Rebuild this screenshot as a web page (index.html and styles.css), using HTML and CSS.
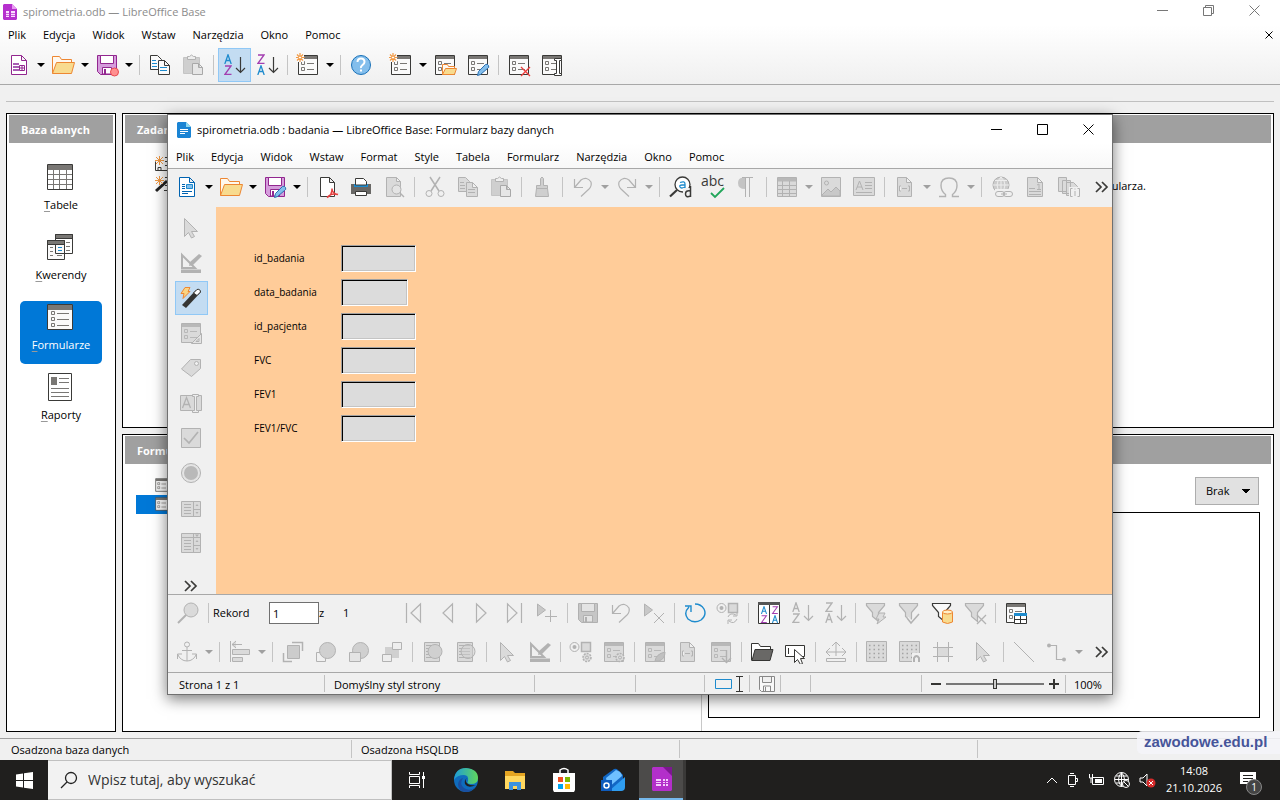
FILE: index.html
```html
<!DOCTYPE html>
<html lang="pl">
<head>
<meta charset="utf-8">
<title>spirometria.odb — LibreOffice Base</title>
<link rel="stylesheet" href="styles.css">
</head>
<body>
<svg class="sprite" aria-hidden="true">
  <symbol id="newdb" viewBox="0 0 24 24"><path d="M4.500 2.500h10l5 5v14h-15zM14.500 2.500v5h5" fill="#fff" stroke="#92278f"/><path d="M6 10h6v8H6z" fill="#a85cb4"/><path d="M6 12.500h6M6 15.500h6" stroke="#fff"/><path d="M12.500 12.500h5v5h-5zM12.500 15h5M15 12.500v5" fill="#fff" stroke="#92278f"/></symbol>
  <symbol id="newdoc" viewBox="0 0 24 24"><path d="M4.500 2.500h10l5 5v14h-15zM14.500 2.500v5h5" fill="#fff" stroke="#0063b1"/><path d="M7 9.500h3M7 11.500h3M7 13.500h3M7 16.500h10M7 18.500h6" stroke="#0063b1"/><path d="M11.500 9.500h6v4h-6z" fill="#83beec" stroke="#1e8bcd"/></symbol>
  <symbol id="folder" viewBox="0 0 24 24"><path d="M1.500 20.500v-17h7l2 3h10v4" fill="#fff8ee" stroke="#ed8733"/><path d="M1.500 20.500l4-11h18l-3 11z" fill="#f8db8f" stroke="#ed8733"/></symbol>
  <symbol id="floppy" viewBox="0 0 24 24"><path d="M2.500 2.500h19v19h-16l-3-3z" fill="var(--p,#d59ddc)" stroke="var(--q,#92278f)"/><path d="M5.500 2.500h13v8h-13zM7.500 21v-6.500h9V21z" fill="var(--w,#fff)" stroke="var(--q,#92278f)"/><path d="M9 16h2v5H9z" fill="var(--q,#92278f)"/></symbol>
  <symbol id="dot" viewBox="0 0 24 24"><circle cx="19.500" cy="19" r="4" fill="#ff9090" stroke="#e84a50"/></symbol>
  <symbol id="pencil" viewBox="0 0 24 24"><path d="M11.500 22.500l1-4 7-7q2-1 3 1t-1 3l-7 6z" fill="#83beec" stroke="#2b6fb0"/></symbol>
  <symbol id="copy" viewBox="0 0 24 24"><path d="M2.500 2.500h7l4 4v10h-11z" fill="var(--f)" stroke="var(--s)"/><path d="M4 7.500h4M4 10.500h5M4 13.500h5" stroke="var(--b)"/><path d="M10.500 7.500h6l5 5v9h-11zM16.500 7.500v5h5" fill="var(--f)" stroke="var(--s)"/><path d="M12 14.500h7M12 17.500h7" stroke="var(--b)"/></symbol>
  <symbol id="paste" viewBox="0 0 24 24"><path d="M2.500 4.500h16v16h-16z" fill="#cfcfcf" stroke="#c4c4c4"/><path d="M6.500 3.500h2q2-3 4 0h2v3h-8z" fill="#eee" stroke="var(--s)"/><path d="M11.500 10.500h6l4 4v7h-10zM17.500 10.500v4h4" fill="#e6e6e6" stroke="#a8a8a8"/></symbol>
  <symbol id="A" viewBox="0 0 8 10"><path d="M.8 10L4 .8 7.200 10M2 6.500h4" fill="none" stroke="var(--a)" stroke-width="1.300"/></symbol>
  <symbol id="Z" viewBox="0 0 8 10"><path d="M1 1h6L1 9.300h6.500" fill="none" stroke="var(--z)" stroke-width="1.300"/></symbol>
  <symbol id="az" viewBox="0 0 24 24"><use href="#A" x="2" y="1" width="8" height="10"/><use href="#Z" x="2" y="12" width="8" height="10"/><path d="M18.500 4v15M14 15l4.500 4.500L23 15" fill="none" stroke="var(--s)" stroke-width="1.200"/></symbol>
  <symbol id="za" viewBox="0 0 24 24"><use href="#Z" x="2" y="1" width="8" height="10"/><use href="#A" x="2" y="12" width="8" height="10"/><path d="M18.500 4v15M14 15l4.500 4.500L23 15" fill="none" stroke="var(--s)" stroke-width="1.200"/></symbol>
  <symbol id="form" viewBox="0 0 24 24"><path d="M2.500 2.500h19v19h-19z" fill="var(--f)" stroke="var(--s)"/><path d="M3 3h18v3H3z" fill="var(--h)"/><path d="M5.500 8.500h3v3h-3zM5.500 14.500h3v3h-3z" fill="none" stroke="var(--h)"/><path d="M11 10.500h7M11 16.500h7" stroke="var(--h)"/></symbol>
  <symbol id="sun" viewBox="0 0 24 24"><path d="M0 0h8v9H0z" fill="var(--bg,#f8f8f8)"/><path d="M4 0v9M-.5 4.500h9M1 1.500l6 6M7 1.500l-6 6" stroke="#f29a45" stroke-width="1.200"/><circle cx="4" cy="4.500" r="1.500" fill="#fff" stroke="#f29a45"/></symbol>
  <symbol id="help" viewBox="0 0 24 24"><circle cx="12" cy="12" r="9.500" fill="#83beec" stroke="#1971b8"/><path d="M8.500 9q0-3.500 3.500-3.500T15.500 9q0 1.500-2 3t-1.500 3" fill="none" stroke="#fff" stroke-width="2"/><path d="M11 16.500h2v2h-2z" fill="#fff"/></symbol>
  <symbol id="minifolder" viewBox="0 0 24 24"><path d="M9.500 21.500v-10h5l1 2h6v2" fill="#fff8ee" stroke="#ed8733"/><path d="M9.500 21.500l3-6h11l-2 6z" fill="#f8db8f" stroke="#ed8733"/></symbol>
  <symbol id="redx" viewBox="0 0 24 24"><path d="M14 14l9 9M23 14l-9 9" stroke="var(--r,#ed3d3b)" stroke-width="1.300"/></symbol>
  <symbol id="ibeam" viewBox="0 0 24 24"><path d="M14.500 5.500h7v2h-2v13h2v2h-7v-2h2v-13h-2z" fill="var(--w,#fff)" stroke="var(--s)"/></symbol>
  <symbol id="pdf" viewBox="0 0 24 24"><path d="M4.500 21.500v-19h9l5 5v14zM13.500 2.500v5h5" fill="#fff" stroke="#3a3a38"/><path d="M11 22.500q5-2 5-9 0 5 6 6-7-2-11 3" fill="none" stroke="#e4403f" stroke-width="1.400"/></symbol>
  <symbol id="print" viewBox="0 0 24 24"><path d="M2 9h20v10H2z" fill="#696866"/><path d="M5 9h14v3H5z" fill="#1e8bcd"/><path d="M6.500 10V3.500h8l3 3V10z" fill="#fff" stroke="#3a3a38"/><path d="M6.500 16.500h11v4h-11z" fill="#fff" stroke="#3a3a38"/></symbol>
  <symbol id="preview" viewBox="0 0 24 24"><path d="M4.500 2.500h10l4 4v15h-14zM14.500 2.500v4h4" fill="var(--f)" stroke="var(--s)"/><circle cx="14.500" cy="14.500" r="4.500" fill="#e4e4e4" stroke="var(--s)"/><path d="M18 18l4 4" stroke="var(--s)" stroke-width="1.500"/></symbol>
  <symbol id="cut" viewBox="0 0 24 24"><path d="M7 2l9 14M17 2L8 16" stroke="var(--s)" stroke-width="1.500"/><circle cx="6" cy="18.500" r="3" fill="none" stroke="var(--s)"/><circle cx="18" cy="18.500" r="3" fill="none" stroke="var(--s)"/></symbol>
  <symbol id="brush" viewBox="0 0 24 24"><path d="M10.500 10.500v-7q1.500-3 3 0v7h4v3h-11v-3zM6.500 13.500l-1 8h13l-1-8z" fill="#cfcfcf" stroke="var(--s)"/></symbol>
  <symbol id="undo" viewBox="0 0 24 24"><path d="M3.500 4v8.500H12M4 12l6-7q6-4 10 2 1 4-2 7l-8 7.500" fill="none" stroke="var(--s)" stroke-width="1.200"/></symbol>
  <symbol id="redo" viewBox="0 0 24 24"><path d="M20.500 4v8.500H12M20 12l-6-7Q8 1 4 7q-1 4 2 7l8 7.500" fill="none" stroke="var(--s)" stroke-width="1.200"/></symbol>
  <symbol id="find" viewBox="0 0 24 24"><circle cx="14.500" cy="9.500" r="7.500" fill="#fff" stroke="#3a3a38" stroke-width="1.300"/><path d="M9 15l-7 6.500" stroke="#3a3a38" stroke-width="2.200"/><path d="M12 7.500q5-2 5 1.500v4m0-3h-3q-3 0-2 2t5 0" fill="none" stroke="#1e8bcd" stroke-width="1.300"/><path d="M15 13h9v10h-9z" fill="#f0f0f0"/><path d="M22.500 11v11M22.500 16q-5-1-5 3t5 2" fill="none" stroke="#3a3a38" stroke-width="1.500"/></symbol>
  <symbol id="check" viewBox="0 0 24 24"><path d="M10 18l4 4 9-9" fill="none" stroke="#21a65a" stroke-width="1.800"/></symbol>
  <symbol id="pilcrow" viewBox="0 0 24 24"><path d="M11 3v11q-7 0-7-6t7-5" fill="#c4c4c4"/><path d="M8 2.500h11M11.500 3v19M15.500 3v19" fill="none" stroke="var(--s)"/></symbol>
  <symbol id="table" viewBox="0 0 24 24"><path d="M2.500 2.500h19v19h-19z" fill="var(--f)" stroke="var(--s)"/><path d="M3 3h18v3.500H3z" fill="var(--h)"/><path d="M3 10.500h18M3 14.500h18M3 18.500h18M7.500 6v15M14.500 6v15" stroke="var(--s)"/></symbol>
  <symbol id="image" viewBox="0 0 24 24"><path d="M2.500 2.500h19v19h-19z" fill="var(--f)" stroke="var(--s)"/><circle cx="7.500" cy="8" r="2" fill="none" stroke="var(--s)"/><path d="M3 20l6-6 3 3 5-5 4 4v5H3z" fill="#c8c8c8" stroke="var(--s)"/></symbol>
  <symbol id="textbox" viewBox="0 0 24 24"><path d="M1.500 2.500h21v18h-21zM13 7.500h7M13 10.500h7M13 13.500h7M4 17.500h16M4 15l3.500-9L11 15M5 12h5" fill="var(--f)" stroke="var(--s)"/></symbol>
  <symbol id="field" viewBox="0 0 24 24"><path d="M4.500 2.500h9l5 5v14h-14zM13.500 2.500v5h5M8 11H6.500v5H8M15 11h1.500v5H15M9 13.500h5" fill="var(--f)" stroke="var(--s)"/></symbol>
  <symbol id="omega" viewBox="0 0 24 24"><path d="M2 21.500h6.500v-2Q4 16 4 10.500 4 3 12 3t8 7.500q0 5.500-4.500 9v2H22" fill="none" stroke="var(--s)" stroke-width="1.400"/></symbol>
  <symbol id="link" viewBox="0 0 24 24"><circle cx="11" cy="10" r="8" fill="#ccc" stroke="var(--s)"/><path d="M11 2v16M3 10h16M5 5.500h12M5 14.500h12M11 2q-8 8 0 16M11 2q8 8 0 16" fill="none" stroke="#eee"/><path d="M5 14h18v9H5z" fill="#f0f0f0"/><rect x="5.500" y="16.500" width="9" height="5" rx="2.500" fill="none" stroke="var(--s)"/><rect x="13.500" y="16.500" width="9" height="5" rx="2.500" fill="none" stroke="var(--s)"/><path d="M11 19h6" stroke="var(--s)"/></symbol>
  <symbol id="footnote" viewBox="0 0 24 24"><path d="M4.500 2.500h10l5 5v14h-15zM14.500 2.500v5h5M6 13.500h6M6 16.500h12M6 19.500h12M14 10l2-1v5M14 14.500h4" fill="var(--f)" stroke="var(--s)"/></symbol>
  <symbol id="cross" viewBox="0 0 24 24"><path d="M2.500 2.500h8v14h-8zM6.500 5.500h8v13h-8zM10.500 7.500h7l4 4v9h-11z" fill="var(--f)" stroke="var(--s)"/><path d="M13 12h11v11H13z" fill="#f0f0f0"/><path d="M16.500 13.500h-2v8h2M21.500 13.500h2v8h-2M19 16v5M19 13.500v1" fill="none" stroke="var(--s)"/></symbol>
  <symbol id="more" viewBox="0 0 24 24"><path d="M6 7l5 5-5 5M12 7l5 5-5 5" fill="none" stroke="#3a3a38" stroke-width="1.700"/></symbol>
  <symbol id="arrow" viewBox="0 0 24 24"><path d="M5.500 2.500v18l4-4 3 5.500 3-1.500-3-5h6z" fill="var(--f)" stroke="var(--s)"/></symbol>
  <symbol id="design" viewBox="0 0 24 24"><path d="M3 4v13h13z" fill="none" stroke="var(--s)" stroke-width="2"/><path d="M10 15l1-4 9-8 3 2-9 9z" fill="var(--s)"/><path d="M2 18.500h20v3.500H2z" fill="var(--s)"/></symbol>
  <symbol id="wand" viewBox="0 0 24 24"><path d="M3 19L17 4q4-2 5 2L7 22z" fill="#353533"/><path d="M14.500 7l3.500-3.500q3-1 3.500 2.500L18 9.500z" fill="#fff" stroke="#353533"/><path d="M6 1.500h5l-2 4h2l-7 7 1-5H2z" fill="#fbd482" stroke="#ed8733"/></symbol>
  <symbol id="triangle" viewBox="0 0 24 24"><path d="M22.500 12.500v10h-10z" fill="#e4e4e4" stroke="var(--s)"/><path d="M20 17.500v3h-3z" fill="none" stroke="var(--s)"/></symbol>
  <symbol id="tag" viewBox="0 0 24 24"><path d="M2.500 13l9-9.500h10v9l-9 8z" fill="var(--f)" stroke="var(--s)"/><circle cx="17.500" cy="7.500" r="2" fill="#f0f0f0" stroke="var(--s)"/></symbol>
  <symbol id="edit" viewBox="0 0 24 24"><path d="M1.500 4.500h21v15h-21z" fill="var(--f)" stroke="var(--s)"/><path d="M3.500 17l4-10.500 4 10.500M5 13.500h5" fill="none" stroke="var(--s)" stroke-width="1.300"/><path d="M13.500 3.500h6v2h-2v14h2v2h-6v-2h2v-14h-2z" fill="#eee" stroke="var(--s)"/></symbol>
  <symbol id="tick" viewBox="0 0 24 24"><path d="M2.500 2.500h19v19h-19z" fill="var(--f)" stroke="var(--s)"/><path d="M5 12l5 5L19 6" fill="none" stroke="var(--s)" stroke-width="1.700"/></symbol>
  <symbol id="radio" viewBox="0 0 24 24"><circle cx="12" cy="12" r="9.500" fill="#e4e4e4" stroke="var(--s)"/><circle cx="12" cy="12" r="7" fill="#b9b9b9"/></symbol>
  <symbol id="list" viewBox="0 0 24 24"><path d="M2.500 5.500h19v15h-19zM14.500 5.500v15M14.500 13.500h7M5 8.500h7M5 11.500h7M5 14.500h7M5 17.500h7" fill="var(--f)" stroke="var(--s)"/><path d="M16.500 10l1.500-2 1.500 2zM16.500 16l1.500 2 1.500-2z" fill="var(--s)"/></symbol>
  <symbol id="combo" viewBox="0 0 24 24"><path d="M2.500 2.500h19v19h-19zM2.500 6.500h19M14.500 2.500v19M14.500 14.500h7M5 9.500h7M5 12.500h7M5 15.500h7M5 18.500h7" fill="var(--f)" stroke="var(--s)"/><path d="M16 3.500h4L18 6zM16.500 11l1.500-2 1.500 2zM16.500 17l1.500 2 1.500-2z" fill="var(--s)"/></symbol>
  <symbol id="search" viewBox="0 0 24 24"><circle cx="15" cy="9" r="7" fill="var(--f)" stroke="var(--s)"/><path d="M10 14l-8 8" stroke="var(--s)" stroke-width="2"/></symbol>
  <symbol id="first" viewBox="0 0 24 24"><path d="M3.500 2v20M17.500 3v18L8 12z" fill="none" stroke="var(--s)" stroke-width="1.200"/></symbol>
  <symbol id="prev" viewBox="0 0 24 24"><path d="M16.500 3v18L7 12z" fill="none" stroke="var(--s)" stroke-width="1.200"/></symbol>
  <symbol id="next" viewBox="0 0 24 24"><path d="M7.500 3v18l9.500-9z" fill="none" stroke="var(--s)" stroke-width="1.200"/></symbol>
  <symbol id="last" viewBox="0 0 24 24"><path d="M19.500 2v20M5.500 3v18l9.500-9z" fill="none" stroke="var(--s)" stroke-width="1.200"/></symbol>
  <symbol id="recnew" viewBox="0 0 24 24"><path d="M2.500 3v12l8-6z" fill="#c8c8c8" stroke="var(--s)"/><path d="M10 15.500h12M15.500 9v12" stroke="var(--s)"/></symbol>
  <symbol id="recdel" viewBox="0 0 24 24"><path d="M2.500 3v12l8-6z" fill="#c8c8c8" stroke="var(--s)"/><path d="M12 12l10 10M22 12L12 22" stroke="var(--s)"/></symbol>
  <symbol id="refresh" viewBox="0 0 24 24"><path d="M6 6q-6 6-1 12 6 5 13 1 6-5 3-11-3-5-9-5M2 5h6v6" fill="none" stroke="#1e8bcd" stroke-width="1.400"/></symbol>
  <symbol id="controls" viewBox="0 0 24 24"><circle cx="5.500" cy="7" r="4.500" fill="none" stroke="var(--s)"/><circle cx="5.500" cy="7" r="2" fill="var(--s)"/><path d="M12.500 2.500h9v9h-9z" fill="var(--f)" stroke="var(--s)" stroke-width="1.500"/></symbol>
  <symbol id="cycle" viewBox="0 0 24 24"><path d="M12 16q2-5 8-2m1-3v4h-4M21 18q-3 6-8 2m-1 3v-4h4" fill="none" stroke="var(--s)"/></symbol>
  <symbol id="gear" viewBox="0 0 24 24"><circle cx="18" cy="17.500" r="4" fill="#ddd" stroke="var(--s)" stroke-width="1.500" stroke-dasharray="2 1"/><circle cx="18" cy="17.500" r="1.500" fill="none" stroke="var(--s)"/></symbol>
  <symbol id="azza" viewBox="0 0 24 24"><path d="M1.500 1.500h21v21h-21zM12.500 4v18" fill="#fff" stroke="#353533"/><path d="M1 1h22v3H1z" fill="#555"/><use href="#A" x="3" y="5" width="8" height="8"/><use href="#Z" x="3" y="14" width="8" height="8"/><use href="#Z" x="14" y="5" width="8" height="8"/><use href="#A" x="14" y="14" width="8" height="8"/></symbol>
  <symbol id="funnel" viewBox="0 0 24 24"><path d="M2.500 2.500h18v2l-6 7v9l-6-5v-4l-6-7z" fill="var(--f)" stroke="var(--s)" stroke-width="1.200"/></symbol>
  <symbol id="bolt" viewBox="0 0 24 24"><path d="M15 12h6l-2 4h3l-9 7 2-5h-3z" fill="#ddd" stroke="var(--s)"/></symbol>
  <symbol id="ok" viewBox="0 0 24 24"><path d="M10 17l4 5 8-9" fill="none" stroke="#f0f0f0" stroke-width="4"/><path d="M10 17l4 5 8-9" fill="none" stroke="var(--s)" stroke-width="1.500"/></symbol>
  <symbol id="cyl" viewBox="0 0 24 24"><path d="M12.500 11v10q5 3 10 0V11" fill="#f8db8f" stroke="#ed8733"/><ellipse cx="17.500" cy="11" rx="5" ry="2" fill="#fff0c8" stroke="#ed8733"/></symbol>
  <symbol id="minitable" viewBox="0 0 24 24"><path d="M10.500 12.500h12v10h-12zM10.500 18.500h12M16.500 13v9" fill="#fff" stroke="#353533"/><path d="M10 12h13v3H10z" fill="#1e8bcd"/></symbol>
  <symbol id="anchor" viewBox="0 0 24 24"><circle cx="12" cy="4.500" r="2.500" fill="none" stroke="var(--s)"/><path d="M12 7v14M7 10.500h10M2.500 19v-5H7M2.500 14q3 7 9.500 7t9.500-7M21.500 19v-5H17" fill="none" stroke="var(--s)"/></symbol>
  <symbol id="align" viewBox="0 0 24 24"><path d="M2.500 1v21M4 4.500h10M8 1L4 4.500 8 8M4.500 9.500h17v5h-17zM4.500 17.500h10v4h-10z" fill="var(--f)" stroke="var(--s)"/></symbol>
  <symbol id="front" viewBox="0 0 24 24"><path d="M11 2.500h10.500V11M2.500 13v8.500H11" fill="none" stroke="var(--s)" stroke-width="1.500"/><path d="M6.500 5.500h12v13h-12z" fill="#ccc" stroke="var(--s)"/></symbol>
  <symbol id="forward" viewBox="0 0 24 24"><path d="M2.500 12.500h9v9h-9z" fill="none" stroke="var(--s)"/><circle cx="13.500" cy="10.500" r="8" fill="#d0d0d0" stroke="var(--s)"/></symbol>
  <symbol id="backone" viewBox="0 0 24 24"><circle cx="13.500" cy="10.500" r="8" fill="#d0d0d0" stroke="var(--s)"/><path d="M2.500 12.500h11v9h-11z" fill="#e4e4e4" stroke="var(--s)"/></symbol>
  <symbol id="back" viewBox="0 0 24 24"><path d="M5 7h14v11H5z" fill="#d0d0d0"/><path d="M12.500 2.500h9v7h-9zM2.500 14.500h9v7h-9z" fill="#eee" stroke="var(--s)"/></symbol>
  <symbol id="wrap" viewBox="0 0 24 24"><path d="M3.500 2.500h15v19h-15zM5 5.500h11M5 8.500h11M5 11.500h11M5 14.500h11M5 17.500h11" fill="var(--f)" stroke="var(--s)"/><circle cx="14" cy="11.500" r="7" fill="var(--cover,#d0d0d0)" stroke="var(--s)"/></symbol>
  <symbol id="pen" viewBox="0 0 24 24"><path d="M12 21q1-7 10-9 0 7-6 9z" fill="#c0c0c0" stroke="var(--s)"/></symbol>
  <symbol id="down" viewBox="0 0 24 24"><path d="M17.500 10v12M13 18l4.500 4.500L22 18" fill="none" stroke="var(--s)" stroke-width="1.400"/></symbol>
  <symbol id="darkfolder" viewBox="0 0 24 24"><path d="M1.500 20.500v-17h7l2 3h10v3" fill="#fff" stroke="#353533"/><path d="M2 20.500l3-11h18l-3 11z" fill="#696866" stroke="#353533"/></symbol>
  <symbol id="focus" viewBox="0 0 24 24"><path d="M2.500 5.500h19v11h-19zM5.500 8v6" fill="#fff" stroke="#353533"/><path d="M11.500 9.500v13l3-3 3 5 2-1-2-5h4z" fill="#fff" stroke="#353533"/></symbol>
  <symbol id="position" viewBox="0 0 24 24"><path d="M12 3v13M8 6l4-4 4 4M2 12h20M6 8l-4 4 4 4M18 8l4 4-4 4M2.500 18.500h19v3h-19z" fill="none" stroke="var(--s)"/></symbol>
  <symbol id="grid" viewBox="0 0 24 24"><path d="M1.500 1.500h20v20h-20z" fill="var(--f)" stroke="var(--s)"/><path d="M4 5.500h16M4 9.500h16M4 13.500h16M4 17.500h16" stroke="#a4a4a4" stroke-width="1.500" stroke-dasharray="1.500 3"/></symbol>
  <symbol id="magnet" viewBox="0 0 24 24"><path d="M14 13h10v10H14z" fill="#f0f0f0"/><path d="M16 22v-4q2.500-4 5 0v4" fill="none" stroke="var(--s)" stroke-width="2"/></symbol>
  <symbol id="guides" viewBox="0 0 24 24"><path d="M6.500 7.500h11v9h-11z" fill="var(--f)"/><path d="M6.500 2v20M17.500 2v20M2 7.500h20M2 16.500h20" stroke="var(--s)"/></symbol>
  <symbol id="line" viewBox="0 0 24 24"><path d="M2 2l20 20" stroke="var(--s)"/></symbol>
  <symbol id="connector" viewBox="0 0 24 24"><path d="M4 5.500h7.500v14H19" fill="none" stroke="var(--s)" stroke-width="1.200"/><circle cx="4" cy="5.500" r="2" fill="var(--s)"/><circle cx="19" cy="19.500" r="2" fill="var(--s)"/></symbol>
  <symbol id="bigtable" viewBox="0 0 28 28"><path d="M1.500 1.500h25v25h-25z" fill="#fff" stroke="#3a3a38"/><path d="M2 2h24v4H2z" fill="#797774"/><path d="M2 6.500h24M2 11.500h24M2 16.500h24M2 21.500h24M7.500 6v20M13.500 6v20M20.500 6v20" stroke="#797774"/></symbol>
  <symbol id="bigquery" viewBox="0 0 28 28"><path d="M9.500 1.500h17v19h-17z" fill="#fff" stroke="#3a3a38"/><path d="M9.500 1.500h17v4h-17z" fill="#797774" stroke="#3a3a38"/><path d="M20 9.500h4M20 13.500h4M20 17.500h4" stroke="#797774"/><path d="M1.500 7.500h17v19h-17z" fill="#fafafa" stroke="#3a3a38"/><path d="M1.500 7.500h17v4h-17z" fill="#797774" stroke="#3a3a38"/><path d="M4 14.500h3M4 18.500h3M4 22.500h3M11 22.500h5" stroke="#797774"/><path d="M9.500 12v8.500h9" fill="none" stroke="#3a3a38"/><path d="M12 14.500h4M12 17.500h4" stroke="#1e8bcd"/></symbol>
  <symbol id="bigform" viewBox="0 0 28 28"><path d="M1.500 1.500h25v25h-25z" fill="#fafafa" stroke="#3a3a38"/><path d="M2 2h24v5H2z" fill="#797774"/><path d="M5.500 8.500h3v3h-3zM5.500 14.500h3v3h-3zM5.500 20.500h3v3h-3zM11 10.500h12M11 16.500h12M11 22.500h12" fill="none" stroke="#797774"/></symbol>
  <symbol id="bigreport" viewBox="0 0 28 28"><path d="M2.500.5h23v27h-23z" fill="#fff" stroke="#3a3a38"/><path d="M5 4h6v8H5z" fill="#797774"/><path d="M13 5.500h10M13 9.500h10M5 15.500h18M5 19.500h18M5 23.500h18" stroke="#797774"/></symbol>
</svg>

<main class="base">
  <header class="chrome">
    <div class="titlebar">
      <svg class="appicon" viewBox="0 0 14 16"><path d="M1 0h8l5 5v10l-1 1H1l-1-1V1z" fill="#b62fce"/><path d="M9 0l5 5H9z" fill="#e89af2"/><path d="M3 7h3v6H3zM8 7h4v6H8z" fill="#fbdcff"/><path d="M3 9.500h9M3 11.500h9" stroke="#b62fce" stroke-width=".7"/></svg>
      <h1>spirometria.odb — LibreOffice Base</h1>
      <div class="winbtns">
        <button aria-label="Minimalizuj"><svg viewBox="0 0 11 11"><path d="M0 5.500h11"/></svg></button>
        <button aria-label="Przywróć"><svg viewBox="0 0 11 11"><path d="M.5 2.500h8v8h-8zM2.500 2.500v-2h8v8h-2"/></svg></button>
        <button aria-label="Zamknij"><svg viewBox="0 0 11 11"><path d="M.5.5l10 10M10.500.5l-10 10"/></svg></button>
      </div>
    </div>
    <nav class="menubar">
      <button>Plik</button><button>Edycja</button><button>Widok</button><button>Wstaw</button><button>Narzędzia</button><button>Okno</button><button>Pomoc</button>
      <button class="closedoc" aria-label="Zamknij dokument"><svg viewBox="0 0 8 8"><path d="M.5.5l7 7M7.500.5l-7 7"/></svg></button>
    </nav>
    <div class="toolbar">
      <button class="tool drop" aria-label="Nowy"><svg><use href="#newdb"/></svg><i></i></button>
      <button class="tool drop" aria-label="Otwórz"><svg><use href="#folder"/></svg><i></i></button>
      <button class="tool drop" aria-label="Zapisz"><svg><use href="#floppy"/><use href="#dot"/></svg><i></i></button>
      <span class="sep"></span>
      <button class="tool" aria-label="Kopiuj"><svg><use href="#copy"/></svg></button>
      <button class="tool off" aria-label="Wklej"><svg><use href="#paste"/></svg></button>
      <span class="sep"></span>
      <button class="tool active" aria-label="Sortuj rosnąco"><svg><use href="#az"/></svg></button>
      <button class="tool" aria-label="Sortuj malejąco"><svg><use href="#za"/></svg></button>
      <span class="sep"></span>
      <button class="tool drop" aria-label="Formularz"><svg><use href="#form"/><use href="#sun"/></svg><i></i></button>
      <span class="sep"></span>
      <button class="tool" aria-label="Pomoc"><svg><use href="#help"/></svg></button>
      <button class="tool drop apart" aria-label="Nowy formularz"><svg><use href="#form"/><use href="#sun"/></svg><i></i></button>
      <button class="tool" aria-label="Otwórz obiekt"><svg><use href="#form"/><use href="#minifolder"/></svg></button>
      <button class="tool" aria-label="Edytuj"><svg><use href="#form"/><use href="#pencil"/></svg></button>
      <span class="sep"></span>
      <button class="tool" aria-label="Usuń"><svg><use href="#form"/><use href="#redx"/></svg></button>
      <button class="tool" aria-label="Zmień nazwę"><svg><use href="#form"/><use href="#ibeam"/></svg></button>
    </div>
  </header>
  <div class="strip"></div>
  <div class="workspace">
    <aside class="panel">
      <h2>Baza danych</h2>
      <nav class="objects">
        <button><svg><use href="#bigtable"/></svg><span><u>T</u>abele</span></button>
        <button><svg><use href="#bigquery"/></svg><span><u>K</u>werendy</span></button>
        <button class="chosen"><svg><use href="#bigform"/></svg><span><u>F</u>ormularze</span></button>
        <button><svg><use href="#bigreport"/></svg><span><u>R</u>aporty</span></button>
      </nav>
    </aside>
    <div class="panes">
      <section class="panel tasks">
        <h2>Zadania</h2>
        <div class="taskbody">
          <ul class="icons"><li><svg viewBox="0 0 20 20"><path d="M.5 5.500v9h18v-13H10M3 11.500h3v3H3zM10 5.500h9M10 9.500h9" fill="none" stroke="#3a3a38"/><path d="M4.500 0v9M0 4.500h9M1 1l7 7M8 1L1 8" stroke="#f29a45"/></svg></li><li><svg viewBox="0 0 20 20"><path d="M10 1.500h9v13H9M10 5.500h9M10 9.500h9" fill="none" stroke="#3a3a38"/><path d="M1 15L12 5" stroke="#222" stroke-width="3"/><path d="M4.500 0v9M0 4.500h9M1 1l7 7M8 1L1 8" stroke="#f29a45"/></svg></li></ul>
          <p>formularza.</p>
        </div>
      </section>
      <section class="panel forms">
        <h2>Formularze</h2>
        <div class="formbody">
          <ul class="icons rows"><li><svg><use href="#form"/></svg></li><li class="picked"><svg><use href="#form"/></svg></li></ul>
          <div class="preview">
            <select aria-label="Podgląd"><option>Brak</option></select>
            <div class="frame"></div>
          </div>
        </div>
      </section>
    </div>
  </div>
  <footer class="basestatus"><span>Osadzona baza danych</span><span>Osadzona HSQLDB</span><span></span><span></span></footer>
  <div class="watermark">zawodowe.edu.pl</div>
</main>

<section class="dialog" aria-label="badania">
  <header class="dialoghead">
    <div class="titlebar">
      <svg class="appicon" viewBox="0 0 14 16"><path d="M1 0h8l5 5v10l-1 1H1l-1-1V1z" fill="#1a84d4"/><path d="M9 0l5 5H9z" fill="#8bd8f0"/><path d="M3 7.500h8M3 9.500h8M3 11.500h5" stroke="#fff"/></svg>
      <h1>spirometria.odb : badania — LibreOffice Base: Formularz bazy danych</h1>
      <div class="winbtns">
        <button aria-label="Minimalizuj"><svg viewBox="0 0 11 11"><path d="M0 5.500h11"/></svg></button>
        <button aria-label="Maksymalizuj"><svg viewBox="0 0 11 11"><path d="M.5.5h10v10H.5z"/></svg></button>
        <button aria-label="Zamknij"><svg viewBox="0 0 11 11"><path d="M.5.5l10 10M10.500.5l-10 10"/></svg></button>
      </div>
    </div>
    <nav class="menubar">
      <button>Plik</button><button>Edycja</button><button>Widok</button><button>Wstaw</button><button>Format</button><button>Style</button><button>Tabela</button><button>Formularz</button><button>Narzędzia</button><button>Okno</button><button>Pomoc</button>
    </nav>
  </header>
  <div class="toolbar standard">
    <button class="tool drop" aria-label="Nowy"><svg><use href="#newdoc"/></svg><i></i></button>
    <button class="tool drop" aria-label="Otwórz"><svg><use href="#folder"/></svg><i></i></button>
    <button class="tool drop" aria-label="Zapisz"><svg><use href="#floppy"/><use href="#pencil"/></svg><i></i></button>
    <span class="sep"></span>
    <button class="tool" aria-label="Eksportuj PDF"><svg><use href="#pdf"/></svg></button>
    <button class="tool" aria-label="Drukuj"><svg><use href="#print"/></svg></button>
    <button class="tool off" aria-label="Podgląd wydruku"><svg><use href="#preview"/></svg></button>
    <span class="sep"></span>
    <button class="tool off" aria-label="Wytnij"><svg><use href="#cut"/></svg></button>
    <button class="tool off" aria-label="Kopiuj"><svg><use href="#copy"/></svg></button>
    <button class="tool off" aria-label="Wklej"><svg><use href="#paste"/></svg></button>
    <span class="sep"></span>
    <button class="tool off" aria-label="Klonuj formatowanie"><svg><use href="#brush"/></svg></button>
    <span class="sep"></span>
    <button class="tool drop off" aria-label="Cofnij"><svg><use href="#undo"/></svg><i></i></button>
    <button class="tool drop off" aria-label="Ponów"><svg><use href="#redo"/></svg><i></i></button>
    <span class="sep"></span>
    <button class="tool" aria-label="Znajdź i zamień"><svg><use href="#find"/></svg></button>
    <button class="tool spell" aria-label="Pisownia"><span>abc</span><svg><use href="#check"/></svg></button>
    <button class="tool off" aria-label="Znaki formatowania"><svg><use href="#pilcrow"/></svg></button>
    <span class="sep"></span>
    <button class="tool drop off" aria-label="Tabela"><svg><use href="#table"/></svg><i></i></button>
    <button class="tool off" aria-label="Obraz"><svg><use href="#image"/></svg></button>
    <button class="tool off" aria-label="Pole tekstowe"><svg><use href="#textbox"/></svg></button>
    <span class="sep"></span>
    <button class="tool drop off" aria-label="Pole"><svg><use href="#field"/></svg><i></i></button>
    <button class="tool drop off" aria-label="Znak specjalny"><svg><use href="#omega"/></svg><i></i></button>
    <span class="sep"></span>
    <button class="tool off" aria-label="Hiperłącze"><svg><use href="#link"/></svg></button>
    <button class="tool off" aria-label="Przypis"><svg><use href="#footnote"/></svg></button>
    <button class="tool off" aria-label="Odsyłacz"><svg><use href="#cross"/></svg></button>
    <button class="more" aria-label="Więcej"><svg><use href="#more"/></svg></button>
  </div>
  <div class="document">
    <div class="sidetools">
      <button class="tool off" aria-label="Zaznacz"><svg><use href="#arrow"/></svg></button>
      <button class="tool off" aria-label="Tryb projektowania"><svg><use href="#design"/></svg></button>
      <button class="tool active" aria-label="Kreatory"><svg><use href="#wand"/></svg></button>
      <button class="tool off" aria-label="Projekt formularza"><svg><use href="#form"/><use href="#triangle"/></svg></button>
      <button class="tool off" aria-label="Etykieta"><svg><use href="#tag"/></svg></button>
      <button class="tool off" aria-label="Pole edycji"><svg><use href="#edit"/></svg></button>
      <button class="tool off" aria-label="Pole wyboru"><svg><use href="#tick"/></svg></button>
      <button class="tool off" aria-label="Pole opcji"><svg><use href="#radio"/></svg></button>
      <button class="tool off" aria-label="Lista"><svg><use href="#list"/></svg></button>
      <button class="tool off" aria-label="Pole kombi"><svg><use href="#combo"/></svg></button>
      <button class="more" aria-label="Więcej"><svg><use href="#more"/></svg></button>
    </div>
    <form class="canvas">
      <label for="f1">id_badania</label><input id="f1">
      <label for="f2">data_badania</label><input id="f2" class="date">
      <label for="f3">id_pacjenta</label><input id="f3">
      <label for="f4">FVC</label><input id="f4">
      <label for="f5">FEV1</label><input id="f5">
      <label for="f6">FEV1/FVC</label><input id="f6">
    </form>
  </div>
  <div class="toolbar record">
    <button class="tool off" aria-label="Znajdź rekord"><svg><use href="#search"/></svg></button>
    <span class="sep"></span>
    <label for="rec">Rekord</label><input id="rec" value="1"><span class="of">z</span><span class="total">1</span>
    <button class="tool off" aria-label="Pierwszy"><svg><use href="#first"/></svg></button>
    <button class="tool off" aria-label="Poprzedni"><svg><use href="#prev"/></svg></button>
    <button class="tool off" aria-label="Następny"><svg><use href="#next"/></svg></button>
    <button class="tool off" aria-label="Ostatni"><svg><use href="#last"/></svg></button>
    <button class="tool off" aria-label="Nowy rekord"><svg><use href="#recnew"/></svg></button>
    <span class="sep"></span>
    <button class="tool off" aria-label="Zapisz rekord"><svg><use href="#floppy"/></svg></button>
    <button class="tool off" aria-label="Cofnij wpis"><svg><use href="#undo"/></svg></button>
    <button class="tool off" aria-label="Usuń rekord"><svg><use href="#recdel"/></svg></button>
    <span class="sep"></span>
    <button class="tool" aria-label="Odśwież"><svg><use href="#refresh"/></svg></button>
    <button class="tool off" aria-label="Odśwież formant"><svg><use href="#controls"/><use href="#cycle"/></svg></button>
    <span class="sep"></span>
    <button class="tool" aria-label="Sortuj"><svg><use href="#azza"/></svg></button>
    <button class="tool off" aria-label="Rosnąco"><svg><use href="#az"/></svg></button>
    <button class="tool off" aria-label="Malejąco"><svg><use href="#za"/></svg></button>
    <span class="sep"></span>
    <button class="tool off" aria-label="Autofiltr"><svg><use href="#funnel"/><use href="#bolt"/></svg></button>
    <button class="tool off" aria-label="Zastosuj filtr"><svg><use href="#funnel"/><use href="#ok"/></svg></button>
    <button class="tool" aria-label="Filtry formularza"><svg><use href="#funnel"/><use href="#cyl"/></svg></button>
    <button class="tool off" aria-label="Usuń filtr"><svg><use href="#funnel"/><use href="#redx"/></svg></button>
    <span class="sep"></span>
    <button class="tool" aria-label="Źródło jako tabela"><svg><use href="#form"/><use href="#minitable"/></svg></button>
  </div>
  <div class="toolbar design">
    <button class="tool drop off" aria-label="Zakotwiczenie"><svg><use href="#anchor"/></svg><i></i></button>
    <span class="sep"></span>
    <button class="tool drop off" aria-label="Wyrównanie"><svg><use href="#align"/></svg><i></i></button>
    <span class="sep"></span>
    <button class="tool off" aria-label="Na wierzch"><svg><use href="#front"/></svg></button>
    <button class="tool off" aria-label="Do przodu"><svg><use href="#forward"/></svg></button>
    <button class="tool off" aria-label="Do tyłu"><svg><use href="#backone"/></svg></button>
    <button class="tool off" aria-label="Na spód"><svg><use href="#back"/></svg></button>
    <span class="sep"></span>
    <button class="tool off" aria-label="Pierwszy plan"><svg><use href="#wrap"/></svg></button>
    <button class="tool off behind" aria-label="Tło"><svg><use href="#wrap"/></svg></button>
    <span class="sep"></span>
    <button class="tool off" aria-label="Zaznacz"><svg><use href="#arrow"/></svg></button>
    <button class="tool off" aria-label="Projektowanie"><svg><use href="#design"/></svg></button>
    <span class="sep"></span>
    <button class="tool off" aria-label="Właściwości formantu"><svg><use href="#controls"/><use href="#gear"/></svg></button>
    <button class="tool off" aria-label="Właściwości formularza"><svg><use href="#form"/><use href="#gear"/></svg></button>
    <span class="sep"></span>
    <button class="tool off" aria-label="Nawigator"><svg><use href="#form"/><use href="#pen"/></svg></button>
    <button class="tool off" aria-label="Dodaj pole"><svg><use href="#field"/></svg></button>
    <button class="tool off" aria-label="Kolejność"><svg><use href="#form"/><use href="#down"/></svg></button>
    <span class="sep"></span>
    <button class="tool" aria-label="Otwórz w trybie projektowania"><svg><use href="#darkfolder"/></svg></button>
    <button class="tool" aria-label="Fokus formantu"><svg><use href="#focus"/></svg></button>
    <span class="sep"></span>
    <button class="tool off" aria-label="Pozycja i rozmiar"><svg><use href="#position"/></svg></button>
    <span class="sep"></span>
    <button class="tool off" aria-label="Siatka"><svg><use href="#grid"/></svg></button>
    <button class="tool off" aria-label="Przyciągaj"><svg><use href="#grid"/><use href="#magnet"/></svg></button>
    <button class="tool off" aria-label="Prowadnice"><svg><use href="#guides"/></svg></button>
    <button class="tool off apart" aria-label="Wybierz"><svg><use href="#arrow"/></svg></button>
    <span class="sep"></span>
    <button class="tool off" aria-label="Linia"><svg><use href="#line"/></svg></button>
    <button class="tool drop off" aria-label="Łącznik"><svg><use href="#connector"/></svg><i></i></button>
    <button class="more" aria-label="Więcej"><svg><use href="#more"/></svg></button>
  </div>
  <footer class="status">
    <span>Strona 1 z 1</span><span>Domyślny styl strony</span><span></span><span></span>
    <span class="cellicon"><svg width="32" height="18" viewBox="0 0 32 18"><path d="M1.500 4.500h16v9h-16z" fill="none" stroke="#1e8bcd"/><path d="M22 1.500h7M22 16.500h7M25.500 2v14" stroke="#353533"/></svg></span>
    <span class="cellicon"><svg width="18" height="18" viewBox="0 0 18 18"><path d="M1.500 1.500h15v15H3.500l-2-2zM4.500 1.500v6h9v-6M5.500 16v-5h7v5M7.500 12v4" fill="#f8f8f8" stroke="#888"/></svg></span>
    <span></span><span></span>
    <div class="zoom"><button aria-label="Pomniejsz"><svg viewBox="0 0 10 10"><path d="M0 5h10"/></svg></button><input type="range" aria-label="Skala" value="50"><button aria-label="Powiększ"><svg viewBox="0 0 10 10"><path d="M0 5h10M5 0v10"/></svg></button></div>
    <span>100%</span>
  </footer>
</section>

<footer class="taskbar">
  <button class="start" aria-label="Start"><svg width="17" height="17" viewBox="0 0 17 17"><path d="M0 2.500l7-1v6.500H0zM8 1.300L17 0v8H8zM0 9h7v6.500l-7-1zM8 9h9v8l-9-1.300z" fill="#fff"/></svg></button>
  <label class="find"><svg width="18" height="18" viewBox="0 0 18 18"><circle cx="11" cy="7" r="5.500" fill="none" stroke="#222" stroke-width="1.300"/><path d="M7 11l-6 6" stroke="#222" stroke-width="1.300"/></svg><input type="text" aria-label="Wyszukaj" placeholder="Wpisz tutaj, aby wyszukać"></label>
  <button class="app" aria-label="Widok zadań"><svg width="18" height="18" viewBox="0 0 18 18"><path d="M1.500 1v2.500h10V1M1.500 17v-2.500h10V17M1.500 5.500h10v7h-10zM15.500 1v16" fill="none" stroke="#fff"/><path d="M14 5h3v3h-3z" fill="#fff"/></svg></button>
  <button class="app" aria-label="Edge"><svg width="26" height="26" viewBox="0 0 26 26"><defs><linearGradient id="e1"><stop stop-color="#1d9bd8"/><stop offset="1" stop-color="#60d65c"/></linearGradient></defs><circle cx="13" cy="13" r="12" fill="#0f6cbd"/><path d="M1 13Q2 1 13 1q12 1 12 10 0 6-7 6-5 0-3-3 1-6-4-6-7 0-10 5" fill="url(#e1)"/><path d="M10 11q-4 6 1 10 6 4 11-1-4 5-9 5-8-1-8-8 1-5 5-6" fill="#1a4fa0"/><path d="M14 11q-3 3 1 6 3 2 8 1-8 4-11-1-1-4 2-6" fill="#201f1e"/></svg></button>
  <button class="app" aria-label="Eksplorator plików"><svg width="24" height="24" viewBox="0 0 24 24"><path d="M2 3h8l2 2h10v16H2z" fill="#e5a522"/><path d="M2 8h20v13H2z" fill="#ffd75e"/><path d="M6 22v-8h12v8h-4v-4h-4v4z" fill="#3b92df"/></svg></button>
  <button class="app" aria-label="Store"><svg width="24" height="26" viewBox="0 0 24 26"><path d="M8 7V3q4-3 8 0v4" fill="none" stroke="#fff" stroke-width="1.500"/><path d="M1 6h22v17l-1 2H2l-1-2z" fill="#fff"/><path d="M6 10h5v5H6z" fill="#f25022"/><path d="M13 10h5v5h-5z" fill="#7fba00"/><path d="M6 17h5v5H6z" fill="#00a4ef"/><path d="M13 17h5v5h-5z" fill="#ffb900"/></svg></button>
  <button class="app" aria-label="Outlook"><svg width="26" height="26" viewBox="0 0 26 26"><path d="M3 10L14 2q2-1 4 1l5 5v13q0 3-3 3H7q-4 0-4-4z" fill="#1267c4"/><path d="M6 11l10-8q6 2 6 6L8 21z" fill="#6fc0ff"/><path d="M25 10v10q0 4-4 4H9z" fill="#2f9df0"/><path d="M1 13h11v11H1z" fill="#0f5cbd"/><circle cx="6.500" cy="18.500" r="2.500" fill="none" stroke="#fff" stroke-width="1.500"/></svg></button>
  <button class="app running" aria-label="LibreOffice Base"><svg width="20" height="24" viewBox="0 0 20 24"><path d="M1 0h12l7 7v16l-1 1H1l-1-1V1z" fill="#b32fca"/><path d="M11 0h9v9z" fill="#7d1791"/><path d="M4 12h5v7H4zM11 12h5v7h-5z" fill="#f5cdfc"/><path d="M4 14.500h12M4 16.500h12M13.500 12v7" stroke="#b32fca"/></svg></button>
  <div class="tray">
    <svg width="12" height="8" viewBox="0 0 12 8"><path d="M1 7l5-5 5 5"/></svg>
    <svg width="12" height="16" viewBox="0 0 12 16"><path d="M1.500 3.500h7v9h-7zM8.500 6.500h2v3h-2M3 1.500h4M3 14.500h4"/></svg>
    <svg width="17" height="14" viewBox="0 0 17 14"><path d="M4.500 4.500h11v7h-11zM1.500 1v4h3V1M3 5v5"/><path d="M7 6h7v4H7z" fill="#fff" stroke="none"/></svg>
    <svg width="16" height="16" viewBox="0 0 16 16"><circle cx="7.500" cy="7.500" r="7"/><path d="M7.500.5v14M.5 7.500h14M2 4h11M2 11h8M7.500.5q-6 7 0 14M7.500.5q6 7 0 14"/><circle cx="12" cy="12" r="3.500" fill="#201f1e"/><path d="M10 10l4 4"/></svg>
    <svg width="17" height="16" viewBox="0 0 17 16"><path d="M1 6h3l4-4v12l-4-4H1z"/><circle cx="12" cy="11" r="4.500" fill="#d62b2b" stroke="none"/><path d="M10 9l4 4M14 9l-4 4"/></svg>
    <time><span>14:08</span><span>21.10.2026</span></time>
    <button class="notice" aria-label="Powiadomienia"><svg width="18" height="18" viewBox="0 0 18 18"><path d="M1 1h16v12h-6l-3 4v-4H1z" fill="#fff" stroke="none"/><path d="M4 4.500h10M4 7.500h10M4 10.500h5" stroke="#201f1e"/></svg><b>1</b></button>
  </div>
</footer>
</body>
</html>
```
FILE: styles.css
```css
* { box-sizing: border-box; }
body {
  margin: 0;
  height: 100vh;
  display: flex;
  flex-direction: column;
  position: relative;
  overflow: hidden;
  font: 11px/16px "Open Sans", "Noto Sans", sans-serif;
  color: #000;
  background: #f0f0f0;
  --s: #3a3a38; --f: #fafafa; --h: #797774; --b: #1e8bcd; --a: #1e8bcd; --z: #a33eb0;
}
button, input, select { font: inherit; color: inherit; margin: 0; padding: 0; }
button { border: 0; background: none; }
h1, h2, p, ul { margin: 0; padding: 0; font-weight: normal; list-style: none; }
.sprite { position: absolute; width: 0; height: 0; }
svg { flex: none; }

.base { flex: 1; min-height: 0; display: flex; flex-direction: column; position: relative; }
.chrome { background: linear-gradient(#fff 25px, #f0f0f0); border-bottom: 1px solid #a8a8a8; }
.titlebar { display: flex; align-items: center; height: 24px; padding-left: 3px; }
.titlebar h1 { flex: 1; font-size: 11px; padding-left: 6px; }
.base .titlebar { color: #8c8c8c; padding-right: 2px; }
.appicon { width: 14px; height: 16px; }
.winbtns { display: flex; }
.winbtns button { width: 46px; height: 24px; display: flex; align-items: center; padding-left: 17px; }
.winbtns svg { width: 11px; height: 11px; fill: none; stroke: #000; }
.base .winbtns svg { stroke: #777; }
.base .winbtns button { height: 21px; margin-bottom: 3px; }
.menubar { display: flex; align-items: center; height: 21px; }
.menubar button { padding: 0 9px 0 8px; }
.menubar .closedoc { margin-left: auto; padding: 0 7px; display: grid; }
.closedoc svg { width: 8px; height: 8px; stroke: #000; }

.toolbar { display: flex; align-items: center; height: 39px; padding: 1px 0 0 3px; }
.tool { position: relative; flex: none; width: 33px; height: 34px; display: flex; align-items: center; padding-left: 4px; }
.tool svg, .more svg { width: 24px; height: 24px; }
.tool.drop { width: 44px; }
.tool i { margin-left: 6px; border: 4px solid transparent; border-top-color: #000; border-bottom: 0; }
.tool.off i { border-top-color: #a0a0a0; }
.tool.active { background: #c3dcf2; border: 1px solid #90c8f6; padding-left: 3px; }
.tool.apart { margin-left: 7px; }
.off { --s: #b2b2b2; --f: #dadada; --h: #b8b8b8; --b: #b2b2b2; --a: #b2b2b2; --z: #b2b2b2; --r: #b2b2b2; --p: #c6c6c6; --q: #b0b0b0; --w: #e4e4e4; }
.behind { --cover: #d0d0d080; }
.sep { flex: none; width: 1px; height: 20px; margin: 0 4px 0 3px; background: #c4c4c4; }
.drop + .sep { margin-left: 4px; }
.more { margin-left: auto; width: 24px; display: flex; }
.toolbar .more { margin-right: -2px; }
.spell span { position: absolute; left: 4px; top: 3px; font-size: 14px; line-height: 16px; color: #3a3a38; }

.strip { height: 17px; margin: 0 6px; border-bottom: 1px solid #c0c0c0; }
.workspace { flex: 1; min-height: 0; display: flex; gap: 6px; padding: 11px 6px 6px; }
.panel { background: #fff; border: 1px solid #000; display: flex; flex-direction: column; min-height: 0; }
.panel h2 { margin: 1px 2px; padding: 0 12px; height: 28px; font: bold 11px/30px "Open Sans", sans-serif; background: #a0a0a0; color: #fff; }
aside.panel { width: 110px; flex: none; }
.objects { display: flex; flex-direction: column; align-items: center; gap: 7px; padding-top: 17px; }
.objects button { width: 82px; height: 63px; border-radius: 5px; display: flex; flex-direction: column; align-items: center; gap: 5px; padding-top: 2px; }
.objects svg { width: 28px; height: 28px; margin-right: 2px; }
.objects span { line-height: 18px; }
.objects .chosen { background: #0078d7; color: #fff; }
.objects u { text-decoration-color: #999; text-underline-offset: 2px; }
.panes { flex: 1; min-width: 0; display: flex; flex-direction: column; gap: 6px; }
.tasks { flex: 315 0 0; }
.forms { flex: 298 0 0; }
.taskbody { display: flex; justify-content: space-between; padding: 12px 127px 0 32px; }
.taskbody p { padding-top: 22px; }
.icons svg { width: 16px; height: 16px; display: block; }
.taskbody .icons svg { width: 20px; height: 20px; }
.formbody { flex: 1; display: flex; justify-content: space-between; }
.rows { padding: 11px 0 0 13px; width: 579px; border-right: 1px solid #c8c8c8; }
.rows li { height: 19px; padding: 1px 18px; }
.rows .picked { background: #0078d7; }
.preview { flex: 1; display: flex; flex-direction: column; align-items: flex-end; gap: 7px; padding: 12px 13px 13px 6px; }
.preview select { width: 64px; height: 28px; margin-right: 1px; padding: 0 10px; border: 1px solid #adadad; border-radius: 0; appearance: none; background: linear-gradient(to bottom right, #000 50%, transparent 51%) 50px 11px / 4px 4px no-repeat, linear-gradient(to bottom left, #000 50%, transparent 51%) 46px 11px / 4px 4px no-repeat, #e1e1e1; }
.frame { flex: 1; align-self: stretch; border: 1px solid #000; }
.basestatus { display: flex; height: 22px; border-top: 1px solid #a0a0a0; line-height: 20px; }
.basestatus span { height: 18px; margin-top: 1px; padding-left: 9px; border-right: 1px solid #c4c4c4; width: 328px; }
.basestatus span:first-child { width: 352px; padding-left: 11px; }
.basestatus span:nth-child(3) { width: 298px; }
.basestatus span:last-child { flex: 1; border: 0; }
.watermark { position: absolute; right: 0; bottom: 6px; width: 143px; height: 23px; padding: 0 7px; border-radius: 5px 0 0 5px; background: #f4f4f8e0; color: #46559a; font: bold 15px/22px "Liberation Sans", sans-serif; }

.dialog { position: absolute; inset: 114px 167px 105px; display: flex; flex-direction: column; border: 1px solid #707070; background: #f0f0f0; box-shadow: 0 4px 14px #0008; }
.dialoghead { background: linear-gradient(#fff 28px, #f8f8f8); border-bottom: 1px solid #a8a8a8; }
.dialog .titlebar { height: 29px; padding-left: 9px; }
.dialog .menubar { height: 24px; padding-top: 1px; }
.dialog .toolbar { padding: 0 0 1px 3px; }
.dialog .standard { height: 38px; padding-bottom: 2px; }
.document { flex: 1; min-height: 0; display: flex; }
.sidetools { width: 48px; flex: none; display: flex; flex-direction: column; gap: 1px; padding: 4px 0 0 7px; }
.sidetools .more { margin: 13px 0 0 4px; }
.canvas { flex: 1; background: #ffcc99; display: grid; grid-template-columns: 87px 1fr; grid-auto-rows: 27px; gap: 7px 0; align-content: start; align-items: center; padding: 38px; font-size: 10px; }
.canvas label { padding-bottom: 2px; }
.canvas input { width: 75px; height: 27px; border: 1px solid; border-color: #a0a0a0 #fff #fff #a0a0a0; background: #dcdcdc; box-shadow: inset 1px 1px #000, inset -1px -1px #c4c4c4; }
.canvas input.date { width: 67px; }
.record { border-top: 1px solid #a8a8a8; }
.dialog .record { padding: 0 0 2px 4px; }
.record label { width: 56px; }
.record input { width: 50px; height: 22px; padding-left: 3px; border: 1px solid #707070; background: #fff; }
.of { width: 24px; }
.total { width: 56px; }
.status { display: flex; height: 22px; border-top: 1px solid #a8a8a8; }
.status > span { flex: none; height: 17px; margin-top: 2px; line-height: 19px; padding-left: 9px; border-right: 1px solid #c0c0c0; }
.status > span:nth-child(1) { width: 157px; padding-left: 11px; }
.status > span:nth-child(2) { width: 210px; }
.status > span:nth-child(3) { width: 101px; }
.status > span:nth-child(4) { width: 69px; }
.status > span:nth-child(5) { width: 45px; }
.status > span:nth-child(6) { width: 31px; padding-left: 8px; }
.status > span:nth-child(7) { width: 30px; }
.status > span:nth-child(8) { flex: 1; }
.status > span:last-child { width: 46px; padding-left: 8px; border: 0; }
.status > .cellicon { display: flex; align-items: center; }
.zoom { width: 144px; display: flex; align-items: center; padding-left: 9px; gap: 5px; border-right: 1px solid #c0c0c0; height: 18px; margin-top: 2px; }
.zoom button { display: grid; }
.zoom button svg { width: 10px; height: 10px; stroke: #353533; stroke-width: 2; }
.zoom input { appearance: none; width: 98px; height: 12px; background: linear-gradient(#777, #777) 0 5px / 100% 2px no-repeat; }
.zoom input::-webkit-slider-thumb { appearance: none; width: 4px; height: 10px; border: 1px solid #353533; background: #ccc; }

.taskbar { height: 40px; flex: none; display: flex; background: #201f1e; color: #fff; }
.start { width: 48px; display: grid; place-items: center; }
.find { width: 344px; display: flex; align-items: center; gap: 10px; padding-left: 12px; background: #f2f2f2; border: 1px solid #c0c0c0; border-width: 1px 1px 1px 0; }
.find input { flex: 1; min-width: 0; border: 0; background: none; font-size: 14px; line-height: 20px; }
.find input::placeholder { color: #333; opacity: 1; }
.app { width: 49px; display: grid; place-items: center; }
.app.running { width: 44px; margin-left: 2px; padding-left: 2px; background: #4c4b4a; border-bottom: 2px solid #76b9ed; box-shadow: 3px 0 #3a3938; }
.tray { margin-left: auto; display: flex; align-items: center; gap: 9px; padding-right: 16px; }
.tray svg { fill: none; stroke: #fff; }
.tray time { display: flex; flex-direction: column; align-items: center; width: 58px; line-height: 17px; padding-bottom: 2px; }
.notice { position: relative; width: 32px; display: grid; place-items: center; }
.notice b { position: absolute; left: 14px; top: 8px; width: 16px; height: 16px; border-radius: 8px; background: #444; border: 1px solid #888; font-size: 10px; font-weight: normal; line-height: 14px; }
```
